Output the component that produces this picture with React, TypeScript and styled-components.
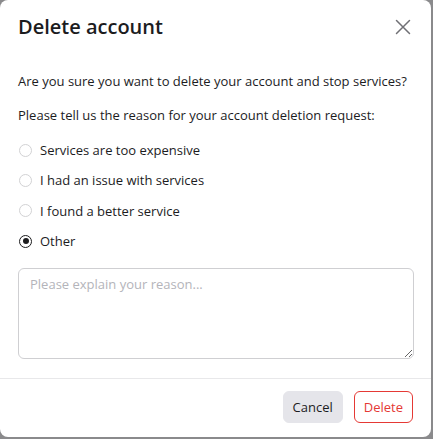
import React, { useState } from "react";
import styled, { createGlobalStyle } from "styled-components";

const GlobalStyle = createGlobalStyle`
  html, body {
    margin: 0;
    padding: 0;
    background: #8a8a8c;
  }
  body {
    font-family: "Open Sans", "Noto Sans", sans-serif;
    color: #1c1c1e;
  }
`;

const Page = styled.div`
  width: 433px;
  height: 439px;
  overflow: hidden;
`;

const Modal = styled.div`
  width: 431px;
  height: 437px;
  background: #ffffff;
  border-radius: 8px;
  display: flex;
  flex-direction: column;
  box-sizing: border-box;
`;

const Header = styled.div`
  height: 54px;
  display: flex;
  align-items: center;
  justify-content: space-between;
  padding: 0 16px 0 18px;
  box-sizing: border-box;
`;

const Title = styled.h2`
  margin: 0;
  font-size: 20px;
  line-height: 28px;
  font-weight: 600;
  color: #1c1c1e;
`;

const CloseButton = styled.button`
  width: 24px;
  height: 24px;
  padding: 0;
  border: none;
  background: transparent;
  display: flex;
  align-items: center;
  justify-content: center;
  cursor: pointer;
  color: #707075;
`;

const Body = styled.div`
  flex: 1;
  padding: 17px 17px 0 18px;
  display: flex;
  flex-direction: column;
`;

const Text = styled.p<{ $gap?: number }>`
  margin: 0 0 ${(p) => p.$gap ?? 0}px 0;
  font-size: 13px;
  line-height: 20px;
  color: #1c1c1e;
`;

const OptionList = styled.div`
  display: flex;
  flex-direction: column;
  margin-bottom: 12px;
`;

const OptionRow = styled.label`
  height: 30.3px;
  display: flex;
  align-items: center;
  gap: 8px;
  padding-left: 1px;
  font-size: 13px;
  color: #1c1c1e;
  cursor: pointer;
`;

const RadioCircle = styled.span<{ $checked: boolean }>`
  width: 13px;
  height: 13px;
  box-sizing: border-box;
  border-radius: 50%;
  border: 1px solid ${(p) => (p.$checked ? "#1c1c1e" : "#d2d2d4")};
  display: flex;
  align-items: center;
  justify-content: center;
  flex-shrink: 0;
  &::after {
    content: "";
    width: 6px;
    height: 6px;
    border-radius: 50%;
    background: #1c1c1e;
    display: ${(p) => (p.$checked ? "block" : "none")};
  }
`;

const HiddenInput = styled.input`
  display: none;
`;

const TextArea = styled.textarea`
  width: 396px;
  height: 91px;
  box-sizing: border-box;
  border: 1px solid #cfcfd2;
  border-radius: 6px;
  padding: 6px 11px;
  font-family: "Open Sans", "Noto Sans", sans-serif;
  font-size: 13px;
  line-height: 18px;
  color: #1c1c1e;
  outline: none;
  resize: vertical;
  &::placeholder {
    color: #b4b4ba;
  }
`;

const Footer = styled.div`
  border-top: 1px solid #e8e8ea;
  padding: 12px 18px 14px 18px;
  display: flex;
  justify-content: flex-end;
  gap: 11px;
`;

const Button = styled.button<{ $variant: "secondary" | "danger" }>`
  height: 32px;
  padding: 0 9px;
  border-radius: 6px;
  font-family: "Open Sans", "Noto Sans", sans-serif;
  font-size: 13px;
  cursor: pointer;
  box-sizing: border-box;
  background: ${(p) => (p.$variant === "secondary" ? "#e5e5ea" : "#ffffff")};
  color: ${(p) => (p.$variant === "secondary" ? "#1c1c1e" : "#e53935")};
  border: 1px solid
    ${(p) => (p.$variant === "secondary" ? "#e5e5ea" : "#e53935")};
`;

const options = [
  "Services are too expensive",
  "I had an issue with services",
  "I found a better service",
  "Other",
];

export default function App() {
  const [selected, setSelected] = useState(3);
  return (
    <>
      <GlobalStyle />
      <Page>
        <Modal>
          <Header>
            <Title>Delete account</Title>
            <CloseButton aria-label="Close">
              <svg width="16" height="16" viewBox="0 0 16 16" fill="none">
                <path
                  d="M1.5 1.5L14.5 14.5M14.5 1.5L1.5 14.5"
                  stroke="currentColor"
                  strokeWidth="1.5"
                  strokeLinecap="round"
                />
              </svg>
            </CloseButton>
          </Header>
          <Body>
            <Text $gap={14}>
              Are you sure you want to delete your account and stop services?
            </Text>
            <Text $gap={10}>
              Please tell us the reason for your account deletion request:
            </Text>
            <OptionList>
              {options.map((o, i) => (
                <OptionRow key={o}>
                  <HiddenInput
                    type="radio"
                    name="reason"
                    checked={selected === i}
                    onChange={() => setSelected(i)}
                  />
                  <RadioCircle $checked={selected === i} />
                  {o}
                </OptionRow>
              ))}
            </OptionList>
            <TextArea placeholder="Please explain your reason..." />
          </Body>
          <Footer>
            <Button $variant="secondary">Cancel</Button>
            <Button $variant="danger">Delete</Button>
          </Footer>
        </Modal>
      </Page>
    </>
  );
}
